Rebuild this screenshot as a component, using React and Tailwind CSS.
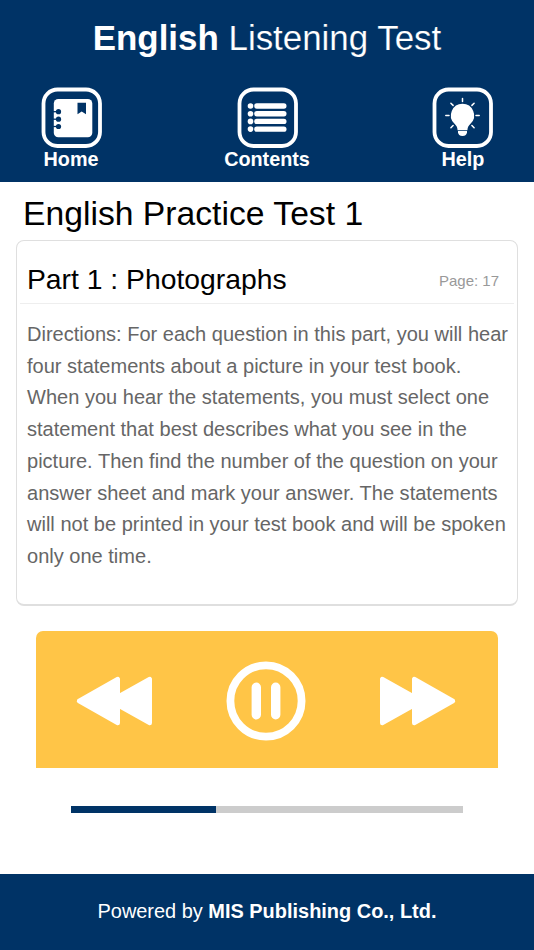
import React from 'react';

const HomeIcon = () => (
  <svg width="61" height="61" viewBox="0 0 61 61" fill="none">
    <rect x="2.5" y="2.5" width="56.5" height="56.5" rx="14" stroke="#fff" strokeWidth="3.8" />
    <rect x="12.8" y="12" width="38.5" height="38.3" rx="4.5" fill="#fff" />
    {/* Binding rings */}
    {[24.7, 32.2, 39.5].map(y => (
      <g key={y}>
        <path d={`M12 ${y}H17`} stroke="#036" strokeWidth="1.3" />
        <circle cx="17.5" cy={y} r="2.6" fill="#036" />
      </g>
    ))}
    <path d="M36.5 15.7H45V27.3L40.7 24.6L36.5 27.3Z" fill="#036" />
  </svg>
);

const ContentsIcon = () => (
  <svg width="61" height="61" viewBox="0 0 61 61" fill="none" className="ml-[1px]">
    <rect x="2.5" y="2.5" width="56.5" height="56.5" rx="14" stroke="#fff" strokeWidth="3.8" />
    {[19, 26.7, 34.4, 42.1].map(y => (
      <g key={y} fill="#fff">
        <circle cx="13.5" cy={y} r="2.8" />
        <rect x="17.2" y={y - 2.7} width="32.3" height="5.4" rx="2.6" />
      </g>
    ))}
  </svg>
);

const HelpIcon = () => (
  <svg width="61" height="61" viewBox="0 0 61 61" fill="none" className="-ml-[1px]">
    <rect x="2.5" y="2.5" width="56.5" height="56.5" rx="14" stroke="#fff" strokeWidth="3.8" />
    <path
      d="M30.5 16.8A11.6 11.6 0 0 1 38.7 36.6C36.8 38.5 35.6 40 35.4 43.3H25.6C25.4 40 24.2 38.5 22.3 36.6A11.6 11.6 0 0 1 30.5 16.8Z"
      fill="#fff"
    />
    <path d="M26 44H35V45.3Q34.7 49 30.5 49T26 45.3Z" fill="#fff" />
    <path
      d="M30.5 11.4V14.6M13.8 28.6H17M44 28.6H47.2M18.9 16.2L21.1 18.4M42.1 16.2L39.9 18.4M18.9 40.7L21.1 38.5M42.1 40.7L39.9 38.5"
      stroke="#fff"
      strokeWidth="1.5"
      strokeLinecap="round"
    />
  </svg>
);

const SeekIcon = ({ className }) => (
  <svg width="76" height="50" viewBox="0 0 76 50" className={className}>
    <path
      d="M3 25L41.8 3V47ZM34.5 25L73.8 3V47Z"
      fill="#fff"
      stroke="#fff"
      strokeWidth="4.4"
      strokeLinejoin="round"
    />
  </svg>
);

const PauseIcon = () => (
  <svg width="80" height="80" viewBox="0 0 80 80" fill="none" stroke="#fff">
    <circle cx="40" cy="40" r="35.6" strokeWidth="7.8" />
    <path d="M30.3 26.2V53.8M49.7 26.2V53.8" strokeWidth="9.4" strokeLinecap="round" />
  </svg>
);

const NavButton = ({ label, children }) => (
  <button className="flex w-[88px] flex-col items-center">
    {children}
    <span className="text-[19.8px] leading-[22px] font-bold">{label}</span>
  </button>
);

const lines = [
  'Directions: For each question in this part, you will hear',
  'four statements about a picture in your test book.',
  'When you hear the statements, you must select one',
  'statement that best describes what you see in the',
  'picture. Then find the number of the question on your',
  'answer sheet and mark your answer. The statements',
  'will not be printed in your test book and will be spoken',
  'only one time.',
];

const App = () => {
  const progress = 37;

  return (
    <div className="flex h-[950px] w-[534px] flex-col bg-white font-['Liberation_Sans',Arial,sans-serif]">
      <header className="h-[182px] shrink-0 bg-[#003366] text-white">
        <h1 className="pt-[17px] text-center text-[34.9px] leading-[42px]">
          <b>English</b> <span className="[-webkit-text-stroke:0.2px_#003366]">Listening Test</span>
        </h1>
        <nav className="mt-[28px] flex justify-between pr-[27px] pl-[27px]">
          <NavButton label="Home"><HomeIcon /></NavButton>
          <NavButton label="Contents"><ContentsIcon /></NavButton>
          <NavButton label="Help"><HelpIcon /></NavButton>
        </nav>
      </header>

      <main className="flex flex-1 flex-col">
        <h2 className="mt-[10px] ml-[23px] text-[33.7px] leading-[42px] text-black">English Practice Test 1</h2>

        <section className="mt-[6px] mr-4 ml-4 h-[366px] rounded-[8px] border border-b-2 border-[#dfdfdf] px-[3px]">
          <div className="flex h-[63px] items-end justify-between border-b border-[#eeeeee] pr-[15px] pl-[7px]">
            <h3 className="mb-[6px] text-[28.3px] leading-[36px] text-black">Part 1 : Photographs</h3>
            <span className="mb-[12px] text-[15px] leading-[20px] text-[#999999]">Page: 17</span>
          </div>
          <p className="mt-[15px] pl-[7px] text-[20.05px] leading-[31.7px] whitespace-nowrap text-[#666666]">
            {lines.map(line => (
              <span key={line} className="block">{line}</span>
            ))}
          </p>
        </section>

        <div className="mt-[25px] ml-[36px] flex h-[137px] w-[462px] items-center justify-between rounded-t-[7px] bg-[#ffc547] pt-[3px] pr-[42px] pl-[40px]">
          <button><SeekIcon /></button>
          <button><PauseIcon /></button>
          <button><SeekIcon className="-scale-x-100" /></button>
        </div>

        <div className="mt-[38px] ml-[71px] h-[7px] w-[392px] bg-[#cccccc]">
          <div className="h-full bg-[#003366]" style={{ width: `${progress}%` }} />
        </div>
      </main>

      <footer className="flex h-[76.5px] shrink-0 items-center justify-center bg-[#003366] text-[19.95px] text-white">
        <p>
          Powered by <b>MIS Publishing Co., Ltd.</b>
        </p>
      </footer>
    </div>
  );
};

export default App;
